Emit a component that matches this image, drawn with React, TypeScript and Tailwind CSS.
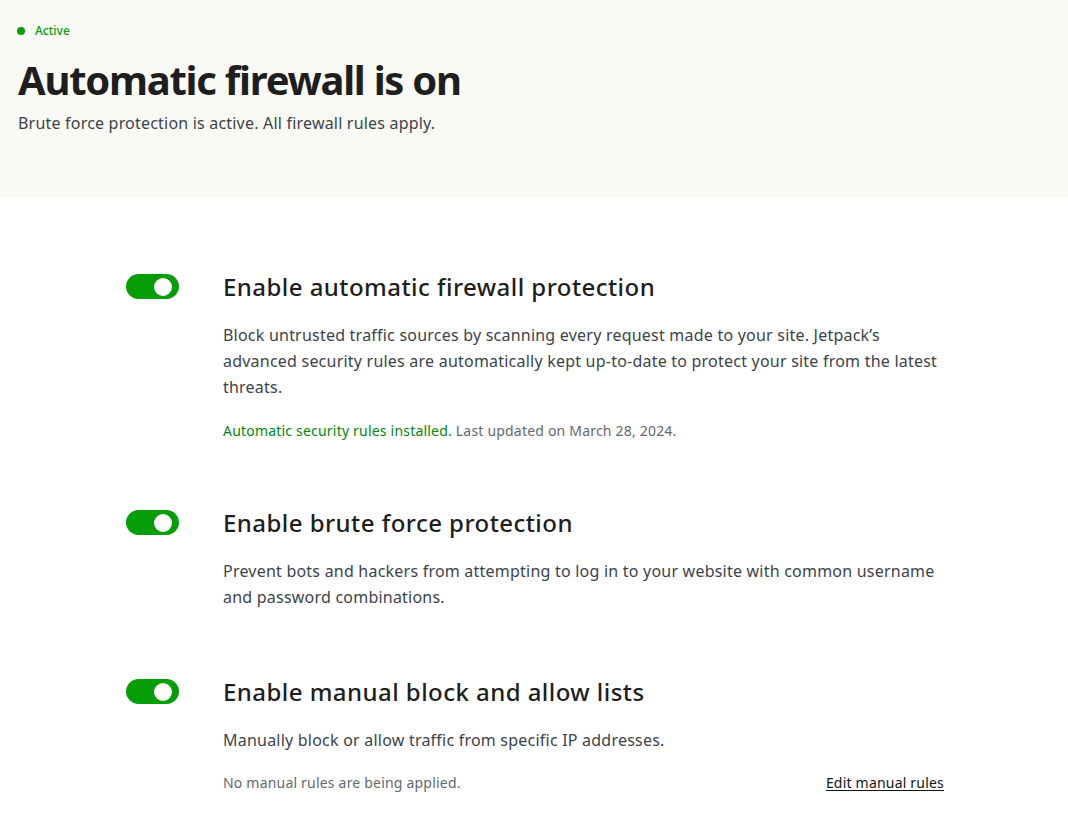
import { useState } from "react";

const font = { fontFamily: '"Noto Sans", "Open Sans", sans-serif' };

function Toggle({ on, onChange }: { on: boolean; onChange: () => void }) {
  return (
    <button
      onClick={onChange}
      className={`relative mt-[3px] h-[25px] w-[53px] shrink-0 rounded-full ${
        on ? "bg-[#069e08]" : "bg-[#a7aaad]"
      }`}
    >
      <span
        className={`absolute top-[3.5px] h-[18px] w-[18px] rounded-full bg-white ${
          on ? "right-[7px]" : "left-[7px]"
        }`}
      />
    </button>
  );
}

type Setting = {
  id: string;
  title: string;
  body: string;
  footer?: React.ReactNode;
};

const settings: Setting[] = [
  {
    id: "waf",
    title: "Enable automatic firewall protection",
    body: "Block untrusted traffic sources by scanning every request made to your site. Jetpack\u2019s advanced security rules are automatically kept up-to-date to protect your site from the latest threats.",
    footer: (
      <p className="mt-[21px] text-sm leading-5 tracking-[0.2px] text-[#646970]">
        <span className="text-[#008710]">Automatic security rules installed.</span> Last updated on
        March 28, 2024.
      </p>
    ),
  },
  {
    id: "brute",
    title: "Enable brute force protection",
    body: "Prevent bots and hackers from attempting to log in to your website with common username and password combinations.",
  },
  {
    id: "manual",
    title: "Enable manual block and allow lists",
    body: "Manually block or allow traffic from specific IP addresses.",
    footer: (
      <div className="mt-5 flex items-center justify-between text-sm leading-5 tracking-[0.2px]">
        <span className="text-[#646970]">No manual rules are being applied.</span>
        <a href="#" className="text-[#101517] underline underline-offset-2">
          Edit manual rules
        </a>
      </div>
    ),
  },
];

export default function App() {
  const [enabled, setEnabled] = useState<Record<string, boolean>>({
    waf: true,
    brute: true,
    manual: true,
  });

  return (
    <div className="min-h-screen bg-white" style={font}>
      {/* Status header */}
      <header className="h-[197px] bg-[#f9f9f6] px-[17px] pt-[21px]">
        <div className="flex items-center gap-[10px] text-xs font-medium leading-5 text-[#069e08]">
          <span className="h-2 w-2 rounded-full bg-[#069e08]" />
          Active
        </div>
        <h1 className="mt-[15px] pl-[1px] text-[40px] font-bold leading-[48px] tracking-[-1.25px] text-[#1e1e1e]">
          Automatic firewall is on
        </h1>
        <p className="mt-[7px] pl-[1px] text-base leading-6 tracking-[0.2px] text-[#3c434a]">
          Brute force protection is active. All firewall rules apply.
        </p>
      </header>

      {/* Settings */}
      <main className="flex flex-col gap-[66px] pl-[126px] pt-[74px]">
        {settings.map((s) => (
          <section key={s.id} className="flex gap-[44px]">
            <Toggle
              on={enabled[s.id]}
              onChange={() => setEnabled((e) => ({ ...e, [s.id]: !e[s.id] }))}
            />
            <div className="w-[721px]">
              <h2 className="text-2xl font-medium leading-8 tracking-[0.45px] text-[#1e1e1e]">
                {s.title}
              </h2>
              <p className="mt-[19px] text-base leading-[26px] tracking-[0.22px] text-[#3c434a]">
                {s.body}
              </p>
              {s.footer}
            </div>
          </section>
        ))}
      </main>
    </div>
  );
}
